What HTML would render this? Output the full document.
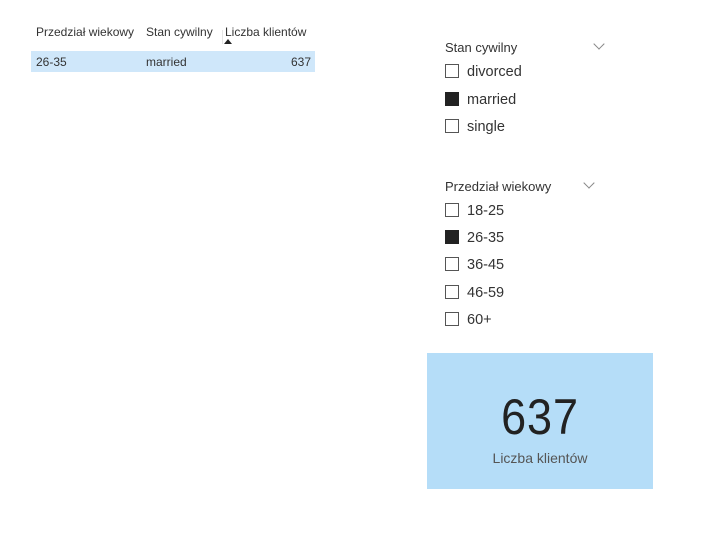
<!DOCTYPE html>
<html><head><style>
body{margin:0;width:702px;height:545px;background:#fff;font-family:"Liberation Sans",sans-serif;color:#222;position:relative;overflow:hidden}
.a{position:absolute;white-space:nowrap}
.h{font-size:12px;color:#333}
.cb{position:absolute;width:12px;height:12px;border:1px solid #555;left:445px;background:#fff}
.cb.on{background:#222;border-color:#222}
.lbl{position:absolute;left:467px;font-size:14.5px;color:#333}
.chev{position:absolute;width:7px;height:7px;border-right:1px solid #888;border-bottom:1px solid #888;transform:rotate(45deg)}
</style></head><body>
<div class="a h" style="left:36px;top:25px">Przedział wiekowy</div>
<div class="a h" style="left:146px;top:25px">Stan cywilny</div>
<div class="a h" style="left:225px;top:25px">Liczba klientów</div>
<div class="a" style="left:224px;top:39px;width:0;height:0;border-left:4px solid transparent;border-right:4px solid transparent;border-bottom:5px solid #222"></div>
<div class="a" style="left:222px;top:30px;width:1px;height:14px;background:#e4e4e4"></div>
<div class="a" style="left:31px;top:51px;width:284px;height:21px;background:#cfe7fa"></div>
<div class="a h" style="left:36px;top:55px">26-35</div>
<div class="a h" style="left:146px;top:55px">married</div>
<div class="a h" style="left:291px;top:55px">637</div>

<div class="a" style="left:445px;top:40px;font-size:13px;color:#333">Stan cywilny</div>
<div class="chev" style="left:595px;top:40px"></div>
<div class="cb" style="top:64px"></div><div class="lbl" style="top:64px">divorced</div>
<div class="cb on" style="top:92px"></div><div class="lbl" style="top:92px">married</div>
<div class="cb" style="top:119px"></div><div class="lbl" style="top:119px">single</div>

<div class="a" style="left:445px;top:179px;font-size:13px;color:#333">Przedział wiekowy</div>
<div class="chev" style="left:585px;top:179px"></div>
<div class="cb" style="top:203px"></div><div class="lbl" style="top:203px">18-25</div>
<div class="cb on" style="top:230px"></div><div class="lbl" style="top:230px">26-35</div>
<div class="cb" style="top:257px"></div><div class="lbl" style="top:257px">36-45</div>
<div class="cb" style="top:285px"></div><div class="lbl" style="top:285px">46-59</div>
<div class="cb" style="top:312px"></div><div class="lbl" style="top:312px">60+</div>

<div class="a" style="left:427px;top:353px;width:226px;height:136px;background:#b5ddf8"></div>
<div class="a" style="left:427px;top:388px;width:226px;text-align:center;font-size:50px;color:#222;letter-spacing:1px;transform:scaleX(0.9)">637</div>
<div class="a" style="left:427px;top:450px;width:226px;text-align:center;font-size:14px;color:#555">Liczba klientów</div>
</body></html>
